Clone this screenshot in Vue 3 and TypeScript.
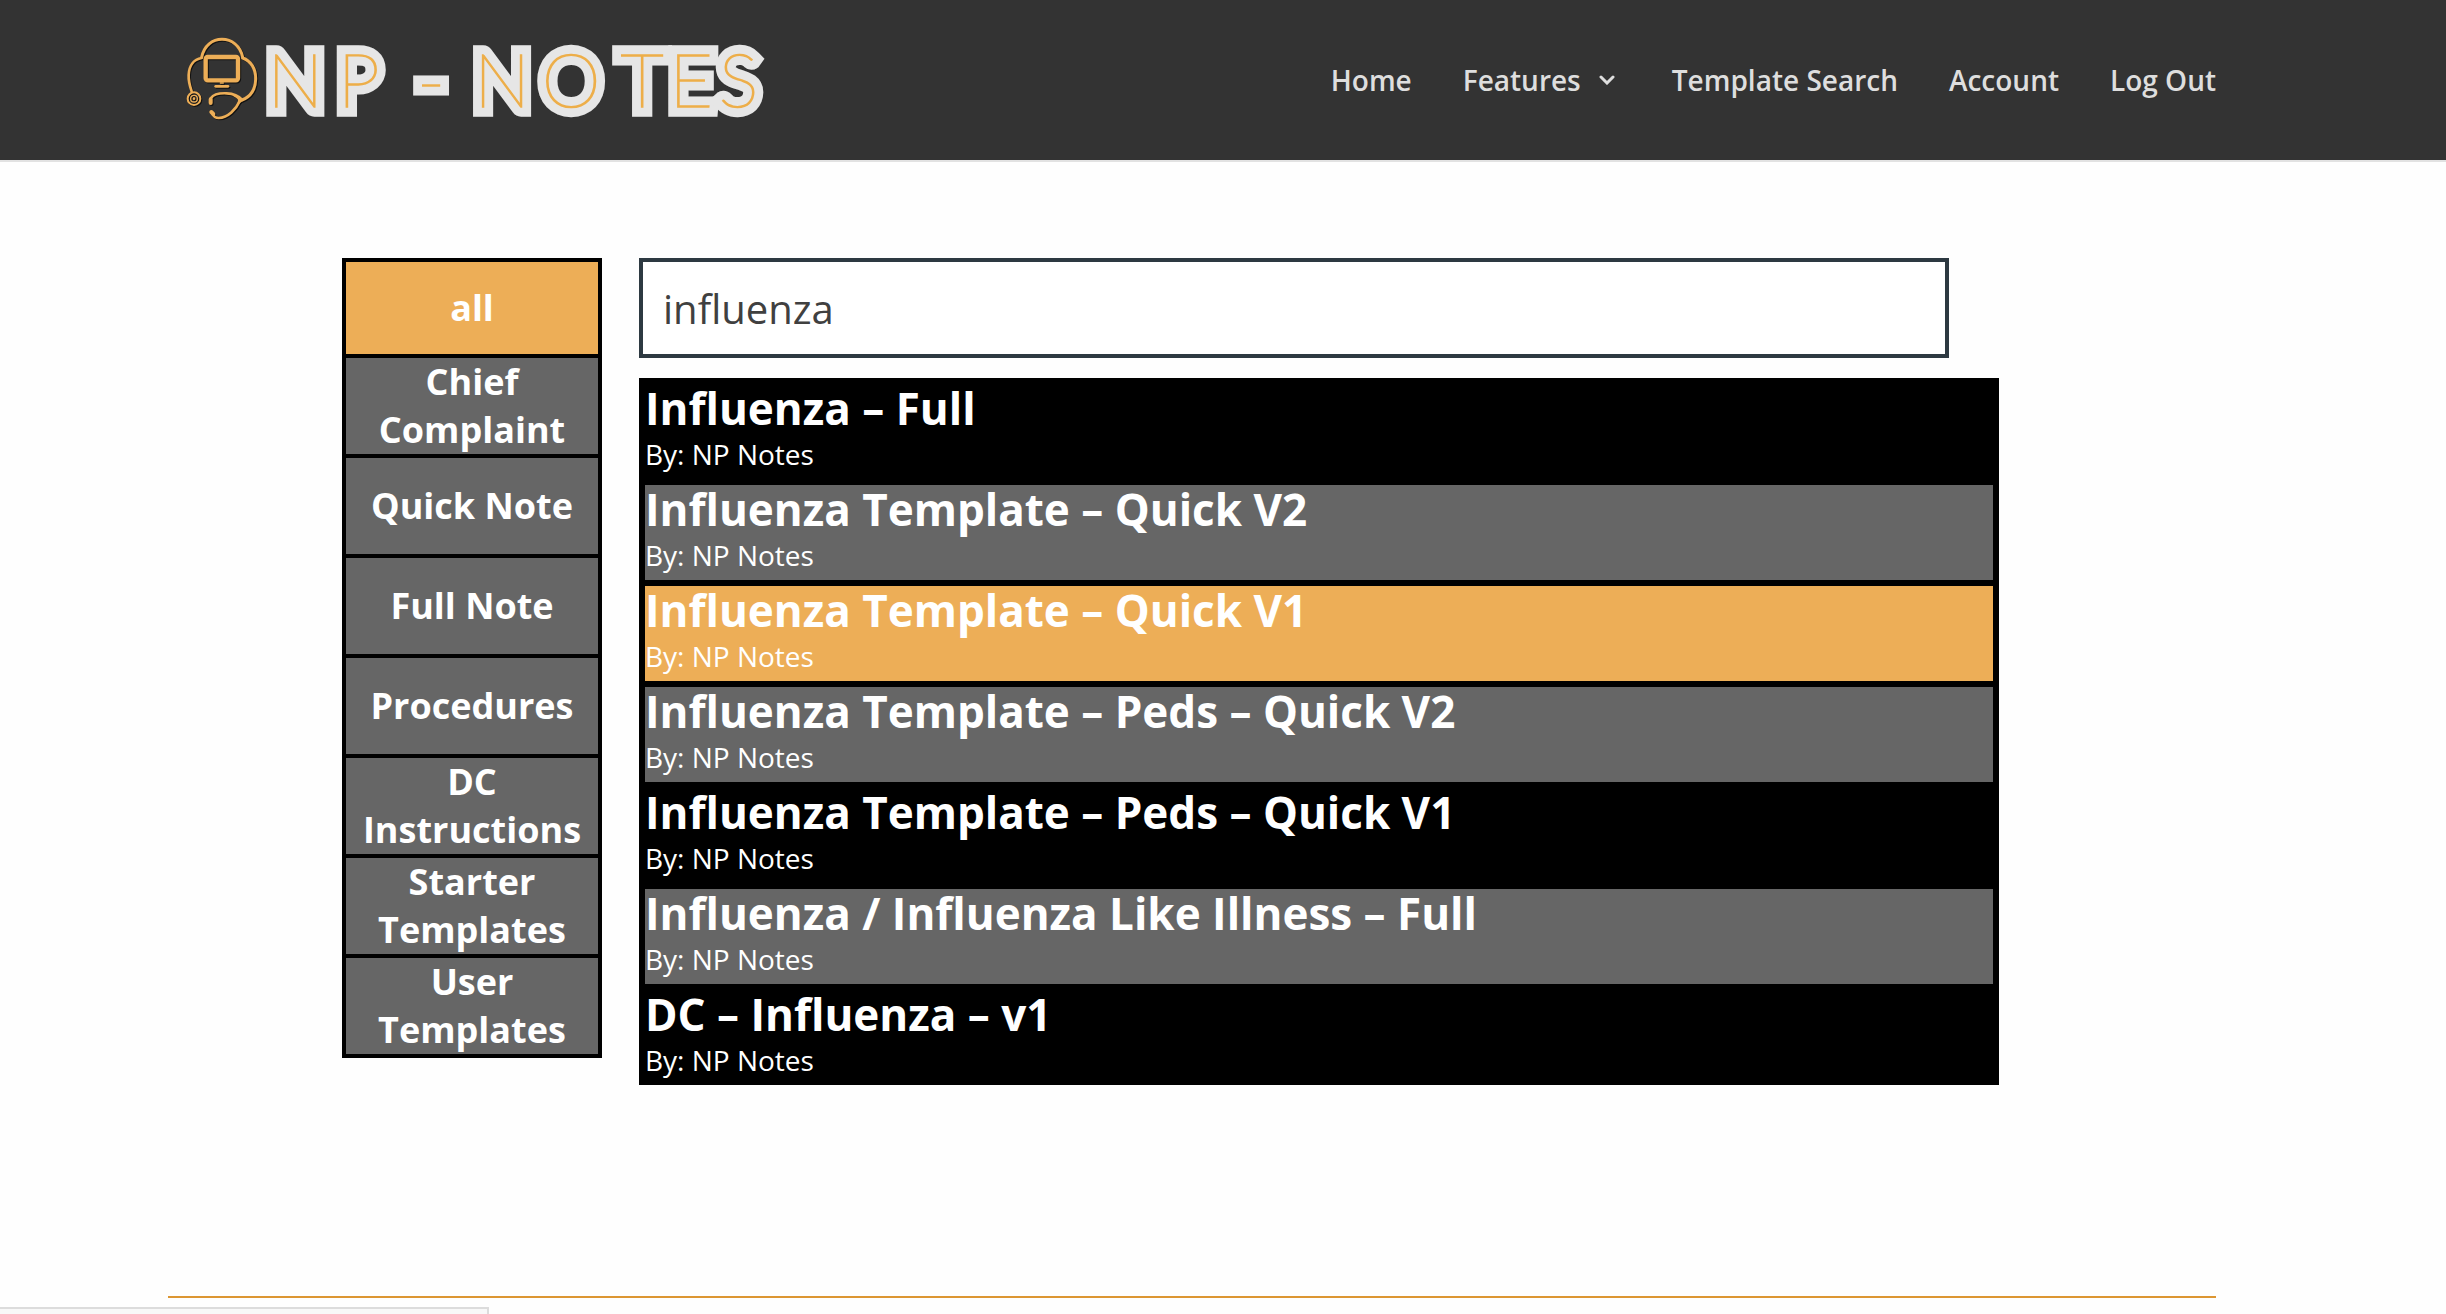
<script setup lang="ts">
import { ref } from 'vue'

interface Template {
  title: string
  author: string
}

const categories: string[] = [
  'all',
  'Chief Complaint',
  'Quick Note',
  'Full Note',
  'Procedures',
  'DC Instructions',
  'Starter Templates',
  'User Templates',
]

const templates: Template[] = [
  { title: 'Influenza – Full', author: 'NP Notes' },
  { title: 'Influenza Template – Quick V2', author: 'NP Notes' },
  { title: 'Influenza Template – Quick V1', author: 'NP Notes' },
  { title: 'Influenza Template – Peds – Quick V2', author: 'NP Notes' },
  { title: 'Influenza Template – Peds – Quick V1', author: 'NP Notes' },
  { title: 'Influenza / Influenza Like Illness – Full', author: 'NP Notes' },
  { title: 'DC – Influenza – v1', author: 'NP Notes' },
]

const activeCategory = ref('all')
const query = ref('influenza')
const highlighted = ref(2)
</script>

<template>
  <div class="page">
    <header class="header">
      <a class="logo" href="#" aria-label="NP - Notes">
        <svg class="logo-art" viewBox="24 30 1836 300">
          <g class="scope" fill="none" stroke-linecap="round" stroke-linejoin="round">
            <path d="M125 112C132 76 158 58 186 58S241 76 248 112" stroke-width="9" />
            <path d="M125 114C101 118 87 137 86 165C85 184 89 197 95 214" stroke-width="8" />
            <path d="M248 114C272 122 288 146 287 178C286 207 272 230 246 240" stroke-width="9" />
            <rect x="137" y="111" width="97" height="70" rx="6" stroke-width="13" />
            <path d="M181 189H190" stroke-width="4" />
            <path d="M167 199H204" stroke-width="8" />
            <circle cx="102" cy="236" r="19" stroke-width="6" />
            <circle cx="102" cy="236" r="10" stroke-width="4" />
            <circle cx="102" cy="236" r="2" stroke-width="4" />
            <path d="M153 234C160 224 178 219 200 220C220 221 236 228 246 239" stroke-width="8" />
            <path d="M222 226C236 234 240 238 236 248L248 240Z" stroke-width="6" />
            <path d="M240 242C228 268 204 293 176 294C165 294 160 288 157 281" stroke-width="8" />
            <path d="M152 238V249M154 276L160 282" stroke-width="12" />
          </g>
          <!-- Wide pale outline first, then the thin inline stroke over it -->
          <defs>
            <text id="wordmark" y="262" x="322 533 700 772 860 942 1145 1382 1528 1676">NP - NOTES</text>
          </defs>
          <use class="wordmark outline" href="#wordmark" />
          <use class="wordmark inline" href="#wordmark" />
        </svg>
      </a>
      <nav class="nav">
        <a href="#">Home</a>
        <a href="#">
          Features
          <svg class="chevron" viewBox="0 0 16 10"><path d="M2 2L8 8L14 2" /></svg>
        </a>
        <a href="#">Template Search</a>
        <a href="#">Account</a>
        <a href="#">Log Out</a>
      </nav>
    </header>

    <main class="main">
      <div class="categories">
        <button
          v-for="name in categories"
          :key="name"
          type="button"
          class="category"
          :class="{ active: name === activeCategory }"
          @click="activeCategory = name"
        >
          {{ name }}
        </button>
      </div>
      <section class="search">
        <input v-model="query" class="query" type="text" aria-label="Search templates" />
        <ul class="results">
          <li
            v-for="(item, i) in templates"
            :key="item.title"
            class="result"
            :class="{ highlighted: i === highlighted }"
          >
            <a href="#">
              <h2>{{ item.title }}</h2>
              <p>By: {{ item.author }}</p>
            </a>
          </li>
        </ul>
      </section>
    </main>

    <hr class="rule" />
    <div class="status-bubble"></div>
  </div>
</template>

<style>
body {
  margin: 0;
  background: #fefefe;
}
</style>

<style scoped>
.page {
  box-sizing: border-box;
  min-height: 100vh;
  overflow: hidden;
  font-family: 'Open Sans', sans-serif;
  color: #fff;
}

.header {
  display: flex;
  align-items: center;
  justify-content: space-between;
  height: 160px;
  padding: 0 230px 0 168px;
  background: #333;
  border-bottom: 2px solid #e2e2e2;
}

.logo {
  display: block;
}

.logo-art {
  display: block;
  width: 612px;
  height: 100px;
}

.scope {
  stroke: #edae57;
  filter: drop-shadow(3px 3px 2px #111);
}

.wordmark {
  font-family: 'Lato', sans-serif;
  font-weight: 100;
  font-size: 225px;
  stroke-miterlimit: 2;
}

.outline {
  fill: #e6e6e6;
  stroke: #e6e6e6;
  stroke-width: 58px;
}

.inline {
  fill: #edae49;
  stroke: #edae49;
  stroke-width: 5px;
}

.nav {
  display: flex;
  gap: 51px;
}

.nav a {
  display: flex;
  align-items: center;
  gap: 18px;
  font-size: 28px;
  line-height: 40px;
  font-weight: 600;
  color: #dedede;
  text-decoration: none;
}

.chevron {
  width: 16px;
  height: 10px;
  fill: none;
  stroke: #dedede;
  stroke-width: 3px;
  stroke-linecap: round;
  margin-right: 6px;
}

.main {
  display: flex;
  align-items: flex-start;
  gap: 37px;
  padding: 96px 447px 0 342px;
}

.categories {
  display: flex;
  flex: 0 0 260px;
  flex-direction: column;
}

.category {
  box-sizing: border-box;
  height: 100px;
  padding: 0 12px;
  border: 4px solid #000;
  border-top-width: 0;
  background: #666;
  color: #fff;
  font: 700 36px/48px 'Open Sans', sans-serif;
  text-align: center;
}

.category:first-child {
  border-top-width: 4px;
}

.category.active {
  background: #edae57;
}

.search {
  flex: 1;
}

.query {
  display: block;
  box-sizing: border-box;
  width: calc(100% - 50px);
  height: 100px;
  padding: 0 20px;
  border: 4px solid #2d3941;
  border-radius: 0;
  background: #fff;
  color: #404040;
  font: 400 40px/54px 'Open Sans', sans-serif;
}

.results {
  display: flex;
  flex-direction: column;
  gap: 6px;
  margin: 20px 0 0;
  padding: 6px 6px 0;
  background: #000;
  list-style: none;
}

.result:nth-child(even) {
  background: #666;
}

.result.highlighted {
  background: #edae57;
}

.result a {
  display: block;
  height: 95px;
  color: #fff;
  text-decoration: none;
}

.result h2 {
  margin: 0;
  font-size: 44px;
  line-height: 48px;
  font-weight: 700;
}

.result p {
  margin: 0;
  font-size: 28px;
  line-height: 44px;
}

.rule {
  margin: 211px 230px 0 168px;
  border: 0;
  border-top: 2px solid #dc9632;
}

.status-bubble {
  position: fixed;
  left: 0;
  bottom: 0;
  box-sizing: border-box;
  width: 20%;
  height: 7px;
  border: 2px solid #dcdcdc;
  border-width: 2px 2px 0 0;
  background: #f8f8f8;
}
</style>
